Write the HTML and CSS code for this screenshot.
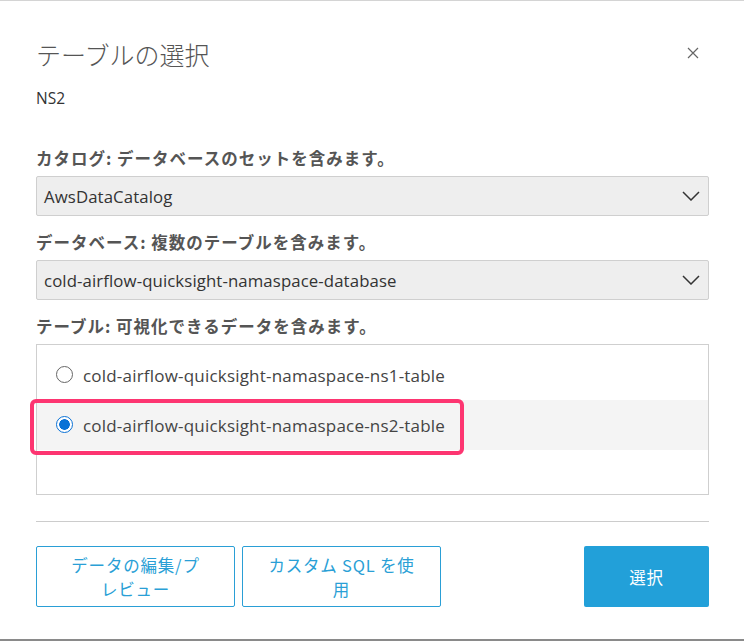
FILE: index.html
```html
<!DOCTYPE html>
<html lang="ja">
<head>
<meta charset="utf-8">
<title>テーブルの選択</title>
<link rel="stylesheet" href="styles.css">
</head>
<body>
<div class="dialog">
  <div class="header">
    <h1 class="title">テーブルの選択</h1>
    <button class="close" aria-label="閉じる">
      <svg width="12" height="12" viewBox="0 0 12 12"><path d="M1 1 L11 11 M11 1 L1 11" stroke="#666" stroke-width="1.2" fill="none"/></svg>
    </button>
  </div>
  <div class="subtitle">NS2</div>

  <div class="field first">
    <div class="label">カタログ: データベースのセットを含みます。</div>
    <div class="select"><span>AwsDataCatalog</span>
      <svg class="chev" width="18" height="10" viewBox="0 0 18 10"><path d="M1 1 L9 9 L17 1" stroke="#333" stroke-width="1.5" fill="none"/></svg>
    </div>
  </div>

  <div class="field">
    <div class="label">データベース: 複数のテーブルを含みます。</div>
    <div class="select"><span>cold-airflow-quicksight-namaspace-database</span>
      <svg class="chev" width="18" height="10" viewBox="0 0 18 10"><path d="M1 1 L9 9 L17 1" stroke="#333" stroke-width="1.5" fill="none"/></svg>
    </div>
  </div>

  <div class="field">
    <div class="label">テーブル: 可視化できるデータを含みます。</div>
    <div class="list">
      <div class="row"><span class="radio"></span><span>cold-airflow-quicksight-namaspace-ns1-table</span></div>
      <div class="row selected"><span class="radio on"></span><span>cold-airflow-quicksight-namaspace-ns2-table</span>
        <div class="highlight"></div>
      </div>
    </div>
  </div>

  <div class="divider"></div>

  <div class="footer">
    <div class="left">
      <button class="btn outline">データの編集/プ<br>レビュー</button>
      <button class="btn outline">カスタム SQL を使<br>用</button>
    </div>
    <button class="btn primary">選択</button>
  </div>
</div>
<div class="bottom-edge"></div>
</body>
</html>
```

FILE: styles.css
```css
html, body {
  margin: 0;
  padding: 0;
  background: #fff;
}
body {
  font-family: "Open Sans", "Noto Sans CJK JP", sans-serif;
  color: #444;
  height: 641px;
  overflow: hidden;
  border-top: 1px solid #d4d4d4;
  box-sizing: border-box;
  position: relative;
}
.dialog {
  padding: 0 35px 0 36px;
}
.header {
  display: flex;
  justify-content: space-between;
  align-items: center;
  padding-top: 37px;
}
.title {
  margin: 0;
  font-family: "Noto Sans CJK JP", sans-serif;
  font-weight: 300;
  font-size: 25px;
  line-height: 32px;
  color: #555;
}
.close {
  border: 0;
  background: none;
  padding: 0;
  margin-right: 10px;
  margin-bottom: 3px;
  width: 12px;
  height: 12px;
  display: flex;
}
.subtitle {
  margin-top: 18px;
  font-size: 15.5px;
  line-height: 20px;
  color: #333;
}
.field.first {
  margin-top: 40px;
}
.field {
  margin-top: 16px;
}
.label {
  font-family: "Noto Sans CJK JP", sans-serif;
  font-weight: 700;
  font-size: 16.5px;
  letter-spacing: 1px;
  line-height: 20px;
  color: #555;
  margin-bottom: 8px;
}
.select {
  height: 40px;
  box-sizing: border-box;
  background: #eeeeee;
  border: 1px solid #cfcfcf;
  border-radius: 2px;
  display: flex;
  align-items: center;
  justify-content: space-between;
  padding: 0 8px 0 7px;
  font-size: 16.8px;
  letter-spacing: 0.1px;
  color: #333;
}
.list {
  border: 1px solid #cfcfcf;
  height: 151px;
  box-sizing: border-box;
  padding-top: 5px;
}
.row {
  position: relative;
  height: 50px;
  display: flex;
  align-items: center;
  padding-left: 19px;
  font-size: 17px;
  letter-spacing: 0.2px;
  color: #444;
}
.row.selected {
  background: #f4f4f4;
}
.radio {
  width: 17px;
  height: 17px;
  box-sizing: border-box;
  border: 1px solid #666;
  border-radius: 50%;
  margin-right: 10px;
  background: #fff;
  position: relative;
  top: -1px;
}
.radio.on {
  border: 1.5px solid #0a72d6;
  background: radial-gradient(circle, #0a72d6 0 5px, #fff 5.6px);
}
.highlight {
  position: absolute;
  left: -7px;
  top: -1px;
  width: 434px;
  height: 56px;
  box-sizing: border-box;
  border: 4px solid #fd3571;
  border-radius: 6px;
  pointer-events: none;
}
.divider {
  margin-top: 26px;
  height: 1px;
  background: #cccccc;
}
.footer {
  margin-top: 24px;
  display: flex;
  justify-content: space-between;
  align-items: flex-start;
}
.left {
  display: flex;
  gap: 7px;
}
.btn {
  font-family: "Noto Sans CJK JP", sans-serif;
  font-size: 16.5px;
  letter-spacing: 0.8px;
  line-height: 24px;
  height: 61px;
  padding: 0;
  border-radius: 2px;
  cursor: pointer;
}
.outline {
  width: 199px;
  background: #fff;
  border: 1px solid #2a9fd6;
  color: #2a9fd6;
}
.primary {
  width: 125px;
  background: #22a0d9;
  border: 0;
  color: #fff;
}
.bottom-edge {
  position: absolute;
  left: 0;
  right: 0;
  bottom: 0;
  height: 2px;
  background: #8a8a8a;
}
```
